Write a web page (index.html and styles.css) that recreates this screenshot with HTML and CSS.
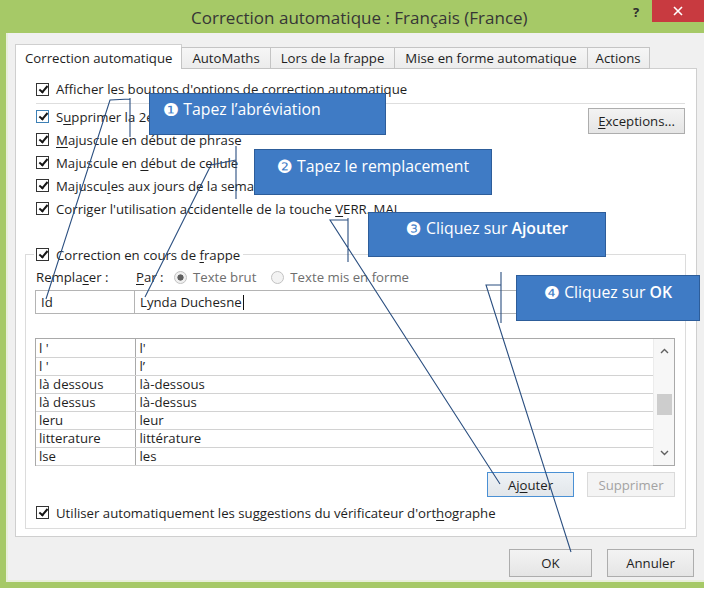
FILE: index.html
```html
<!DOCTYPE html>
<html lang="fr">
<head>
    <meta charset="UTF-8">
    <title>Correction automatique : Français (France)</title>
    <link rel="stylesheet" href="styles.css">
</head>
<body>
    <div class="window">
        <header class="titlebar">
            <div class="title">Correction automatique : Français (France)</div>
            <div class="help">?</div>
            <div class="close">
                <svg width="10" height="10" viewBox="0 0 10 10"><path d="M1 1 L9 9 M9 1 L1 9" stroke="#fff" stroke-width="1.6"/></svg>
            </div>
        </header>

        <div class="frame">
            <nav class="tabs">
                <div class="tab active">Correction automatique</div>
                <div class="tab">AutoMaths</div>
                <div class="tab">Lors de la frappe</div>
                <div class="tab">Mise en forme automatique</div>
                <div class="tab narrow">Actions</div>
                <div class="tab-fill"></div>
            </nav>

            <section class="panel">
                <label class="check first"><span class="cb on"></span><span>Afficher les boutons d'options de correction automatique</span></label>
                <div class="sep"></div>

                <div class="options">
                    <div class="option-list">
                        <label class="check"><span class="cb on focus"></span><span>S<u>u</u>pprimer la 2e majuscule d'un mot</span></label>
                        <label class="check"><span class="cb on"></span><span><u>M</u>ajuscule en début de phrase</span></label>
                        <label class="check"><span class="cb on"></span><span>Majuscule en <u>d</u>ébut de cellule</span></label>
                        <label class="check"><span class="cb on"></span><span>Majuscu<u>l</u>es aux jours de la semaine</span></label>
                        <label class="check"><span class="cb on"></span><span>Corriger l'utilisation accidentelle de la touche <u>V</u>ERR. MAJ</span></label>
                    </div>
                    <button class="btn exceptions"><u>E</u>xceptions...</button>
                </div>

                <div class="group">
                    <label class="check legend"><span class="cb on"></span><span>Correction en cours de <u>f</u>rappe</span></label>

                    <div class="entry-labels">
                        <span class="lbl-replace">Rempla<u>c</u>er :</span>
                        <span class="lbl-by"><u>P</u>ar :</span>
                        <span class="radio on"></span><span class="muted">Texte brut</span>
                        <span class="radio second"></span><span class="muted">Texte mis en forme</span>
                    </div>

                    <div class="entry-fields">
                        <div class="field short">Id</div>
                        <div class="field long">Lynda Duchesne<span class="caret"></span></div>
                    </div>

                    <div class="list">
                        <table class="entries">
                            <colgroup><col class="col-key"><col></colgroup>
                            <tr><td>l '</td><td>l'</td></tr>
                            <tr><td>l '</td><td>l’</td></tr>
                            <tr><td>là dessous</td><td>là-dessous</td></tr>
                            <tr><td>là dessus</td><td>là-dessus</td></tr>
                            <tr><td>leru</td><td>leur</td></tr>
                            <tr><td>litterature</td><td>littérature</td></tr>
                            <tr><td>lse</td><td>les</td></tr>
                        </table>
                        <div class="scrollbar">
                            <svg class="arrow" width="9" height="6" viewBox="0 0 9 6"><path d="M1 5 L4.5 1.5 L8 5" fill="none" stroke="#606060" stroke-width="1.4"/></svg>
                            <div class="track"><div class="thumb"></div></div>
                            <svg class="arrow" width="9" height="6" viewBox="0 0 9 6"><path d="M1 1 L4.5 4.5 L8 1" fill="none" stroke="#606060" stroke-width="1.4"/></svg>
                        </div>
                    </div>

                    <div class="list-actions">
                        <button class="btn default">Aj<u>o</u>uter</button>
                        <button class="btn disabled">Supprimer</button>
                    </div>

                    <label class="check last"><span class="cb on"></span><span>Utiliser automatiquement les suggestions du vérificateur d'ort<u>h</u>ographe</span></label>
                </div>
            </section>

            <footer class="footer">
                <button class="btn ok">OK</button>
                <button class="btn cancel">Annuler</button>
            </footer>
        </div>

        <!-- leader lines of the step callouts -->
        <svg class="leaders" width="704" height="591" viewBox="0 0 704 591">
            <g stroke="#2b4f80" stroke-width="1.1" fill="none">
                <path d="M130 98 V137 M130 99 L110 100 L46 299"/>
                <path d="M236 146 V199 M236 160 L211 165 L145 297"/>
                <path d="M348 218 V262 M348 220 H330 L500 484"/>
                <path d="M501 272 V323 M501 285 H486 L571 552"/>
            </g>
        </svg>

        <div class="callout step1"><span class="num">❶</span> Tapez l’abréviation</div>
        <div class="callout step2"><span class="num">❷</span> Tapez le remplacement</div>
        <div class="callout step3"><span class="num">❸</span> Cliquez sur <b>Ajouter</b></div>
        <div class="callout step4"><span class="num">❹</span> Cliquez sur <b>OK</b></div>
    </div>
</body>
</html>
```

FILE: styles.css
```css
/* Page reset */
html, body {
    margin: 0;
    padding: 0;
    background: #fff;
}

body {
    font-family: 'Open Sans', 'Noto Sans', 'DejaVu Sans', sans-serif;
    font-size: 13.2px;
    color: #1e1e1e;
}

u {
    text-decoration-thickness: 1px;
    text-underline-offset: 2px;
}

/* Window frame */
.window {
    position: relative;
    width: 704px;
    height: 588px;
    background: #a6c967;
    display: flex;
    flex-direction: column;
    overflow: hidden;
}

.titlebar {
    height: 33px;
    display: flex;
    flex: none;
}

.title {
    flex: 1;
    padding-left: 191px;
    padding-top: 6px;
    font-size: 17px;
    color: #363636;
}

.help {
    width: 16px;
    margin-right: 8px;
    padding-top: 3px;
    font-size: 13px;
    font-weight: bold;
    color: #2e2e2e;
    text-align: center;
}

.close {
    width: 52px;
    height: 22px;
    background: #c83a40;
    display: flex;
    align-items: center;
    justify-content: center;
}

.frame {
    flex: 1;
    margin: 0 0 6px 6px;
    background: #f0f0f0;
    border-left: 2px solid #e8efdb;
    border-bottom: 2px solid #e8efdb;
    padding: 0 7px;
    display: flex;
    flex-direction: column;
}

/* Tabs */
.tabs {
    display: flex;
    align-items: flex-end;
    height: 25px;
    margin-top: 11px;
}

.tab {
    height: 22px;
    box-sizing: border-box;
    padding: 0 10px;
    border: 1px solid #c4c4c4;
    margin-left: -1px;
    background: linear-gradient(#f6f6f6, #ececec);
    line-height: 20px;
    white-space: nowrap;
}

.tab.active {
    height: 25px;
    margin-left: 0;
    padding: 0 9px;
    background: #fff;
    border-color: #cfcfcf;
    border-bottom: none;
    line-height: 26px;
}

.tab.narrow {
    padding: 0 8px;
}

.tab-fill {
    flex: 1;
    border-bottom: 1px solid #cfcfcf;
}

/* Tab page */
.panel {
    height: 468px;
    box-sizing: border-box;
    background: #fff;
    border: 1px solid #cfcfcf;
    border-top: none;
    padding-top: 11px;
}

.check {
    display: flex;
    align-items: center;
    gap: 7px;
    height: 18px;
    white-space: nowrap;
}

.check.first {
    margin-left: 20px;
}

.cb {
    position: relative;
    flex: none;
    width: 13px;
    height: 13px;
    box-sizing: border-box;
    border: 1px solid #333;
    background: #fff;
}

.cb.focus {
    border-color: #3d80b5;
}

.cb.on::after {
    content: "";
    position: absolute;
    left: 3.5px;
    top: 0;
    width: 3px;
    height: 7px;
    border: solid #151515;
    border-width: 0 2px 2px 0;
    transform: rotate(40deg);
}

.sep {
    height: 1px;
    background: #dedede;
    margin: 5px 11px 0 20px;
}

.options {
    display: flex;
    justify-content: space-between;
    align-items: flex-start;
    margin-top: 1px;
    padding: 0 11px 0 20px;
}

.option-list .check {
    height: 23px;
}

.btn {
    font: inherit;
    color: #1e1e1e;
    border: 1px solid #adadad;
    background: linear-gradient(#f3f3f3, #e5e5e5);
    padding: 0;
    box-sizing: border-box;
}

.exceptions {
    width: 97px;
    height: 26px;
    margin-top: 3px;
}

/* Replacement group */
.group {
    margin: 34px 10px 7px 9px;
    border: 1px solid #dcdcdc;
    padding: 0 10px 7px 9px;
}

.check.legend {
    width: fit-content;
    height: 17px;
    margin: -9px 0 0 -1px;
    padding: 0 3px 0 2px;
    background: #fff;
}

.entry-labels {
    display: flex;
    align-items: center;
    height: 18px;
    margin-top: 5px;
    white-space: nowrap;
}

.lbl-replace {
    width: 100px;
    margin-left: 1px;
}

.lbl-by {
    width: 38px;
}

.radio {
    flex: none;
    width: 13px;
    height: 13px;
    box-sizing: border-box;
    border: 1px solid #c2c2c2;
    border-radius: 50%;
    background: #f3f3f3;
    margin-right: 6px;
}

.radio.on {
    background: radial-gradient(circle, #606060 0 2.8px, #f0f0f0 3.4px);
}

.radio.second {
    margin-left: 15px;
}

.muted {
    color: #6e6e6e;
}

.entry-fields {
    display: flex;
    height: 24px;
    margin-top: 4px;
}

.field {
    box-sizing: border-box;
    height: 24px;
    border: 1px solid #b4b4b4;
    background: #fff;
    display: flex;
    align-items: center;
}

.field.short {
    width: 100px;
    padding-left: 5px;
}

.field.long {
    flex: 1;
    margin-left: -1px;
    padding-left: 5px;
}

.caret {
    width: 1px;
    height: 15px;
    margin-left: 1px;
    background: #111;
}

/* Replacement list */
.list {
    display: flex;
    height: 128px;
    box-sizing: border-box;
    margin-top: 24px;
    border: 1px solid #a9a9a9;
    background: #fff;
}

.entries {
    flex: 1;
    border-collapse: collapse;
    table-layout: fixed;
    align-self: flex-start;
}

.col-key {
    width: 99px;
}

.entries td {
    height: 18px;
    padding: 0 0 0 3px;
    border-bottom: 1px solid #d2d2d2;
    box-sizing: border-box;
    line-height: 16px;
    white-space: nowrap;
}

.entries td:first-child {
    border-right: 1px solid #a9a9a9;
}

.entries td + td {
    padding-left: 4px;
}

.scrollbar {
    width: 20px;
    display: flex;
    flex-direction: column;
    align-items: center;
    background: #f7f7f7;
    border-left: 1px solid #ececec;
}

.scrollbar .arrow {
    flex: none;
    margin: 9px 0;
}

.track {
    flex: 1;
    width: 15px;
}

.thumb {
    width: 15px;
    height: 21px;
    margin-top: 31px;
    background: #cdcdcd;
}

.list-actions {
    display: flex;
    justify-content: flex-end;
    gap: 13px;
    margin-top: 6px;
}

.list-actions .btn {
    height: 25px;
}

.btn.default {
    width: 87px;
    border-color: #4a90d4;
    background: linear-gradient(#eef2f6, #e2e6ea);
}

.btn.disabled {
    width: 88px;
    color: #a3a3a3;
    border-color: #dadada;
    background: #f4f4f4;
}

.check.last {
    height: 17px;
    margin: 7px 0 0 1px;
}

/* Dialog buttons */
.footer {
    display: flex;
    justify-content: flex-end;
    gap: 15px;
    margin-top: 12px;
    padding-right: 3px;
}

.footer .btn {
    height: 28px;
}

.btn.ok {
    width: 83px;
}

.btn.cancel {
    width: 87px;
}

/* Step callouts drawn over the dialog */
.leaders {
    position: absolute;
    left: 0;
    top: 0;
}

.callout {
    position: absolute;
    box-sizing: border-box;
    background: #3f7bc5;
    border: 1px solid #2d5d9a;
    color: #fff;
    font-size: 15.8px;
    line-height: 20px;
    padding-top: 5px;
    text-align: center;
    white-space: nowrap;
}

.callout .num {
    font-family: 'DejaVu Sans', sans-serif;
    font-size: 18px;
    line-height: 1;
    vertical-align: -1px;
}

.callout b {
    font-weight: 600;
}

.step1 {
    left: 149px;
    top: 93px;
    width: 237px;
    height: 42px;
    text-align: left;
    padding-left: 13px;
}

.step2 {
    left: 254px;
    top: 149px;
    width: 238px;
    height: 46px;
    padding-top: 6px;
}

.step3 {
    left: 368px;
    top: 212px;
    width: 238px;
    height: 45px;
}

.step4 {
    left: 516px;
    top: 275px;
    width: 184px;
    height: 46px;
    padding-top: 6px;
}
```
